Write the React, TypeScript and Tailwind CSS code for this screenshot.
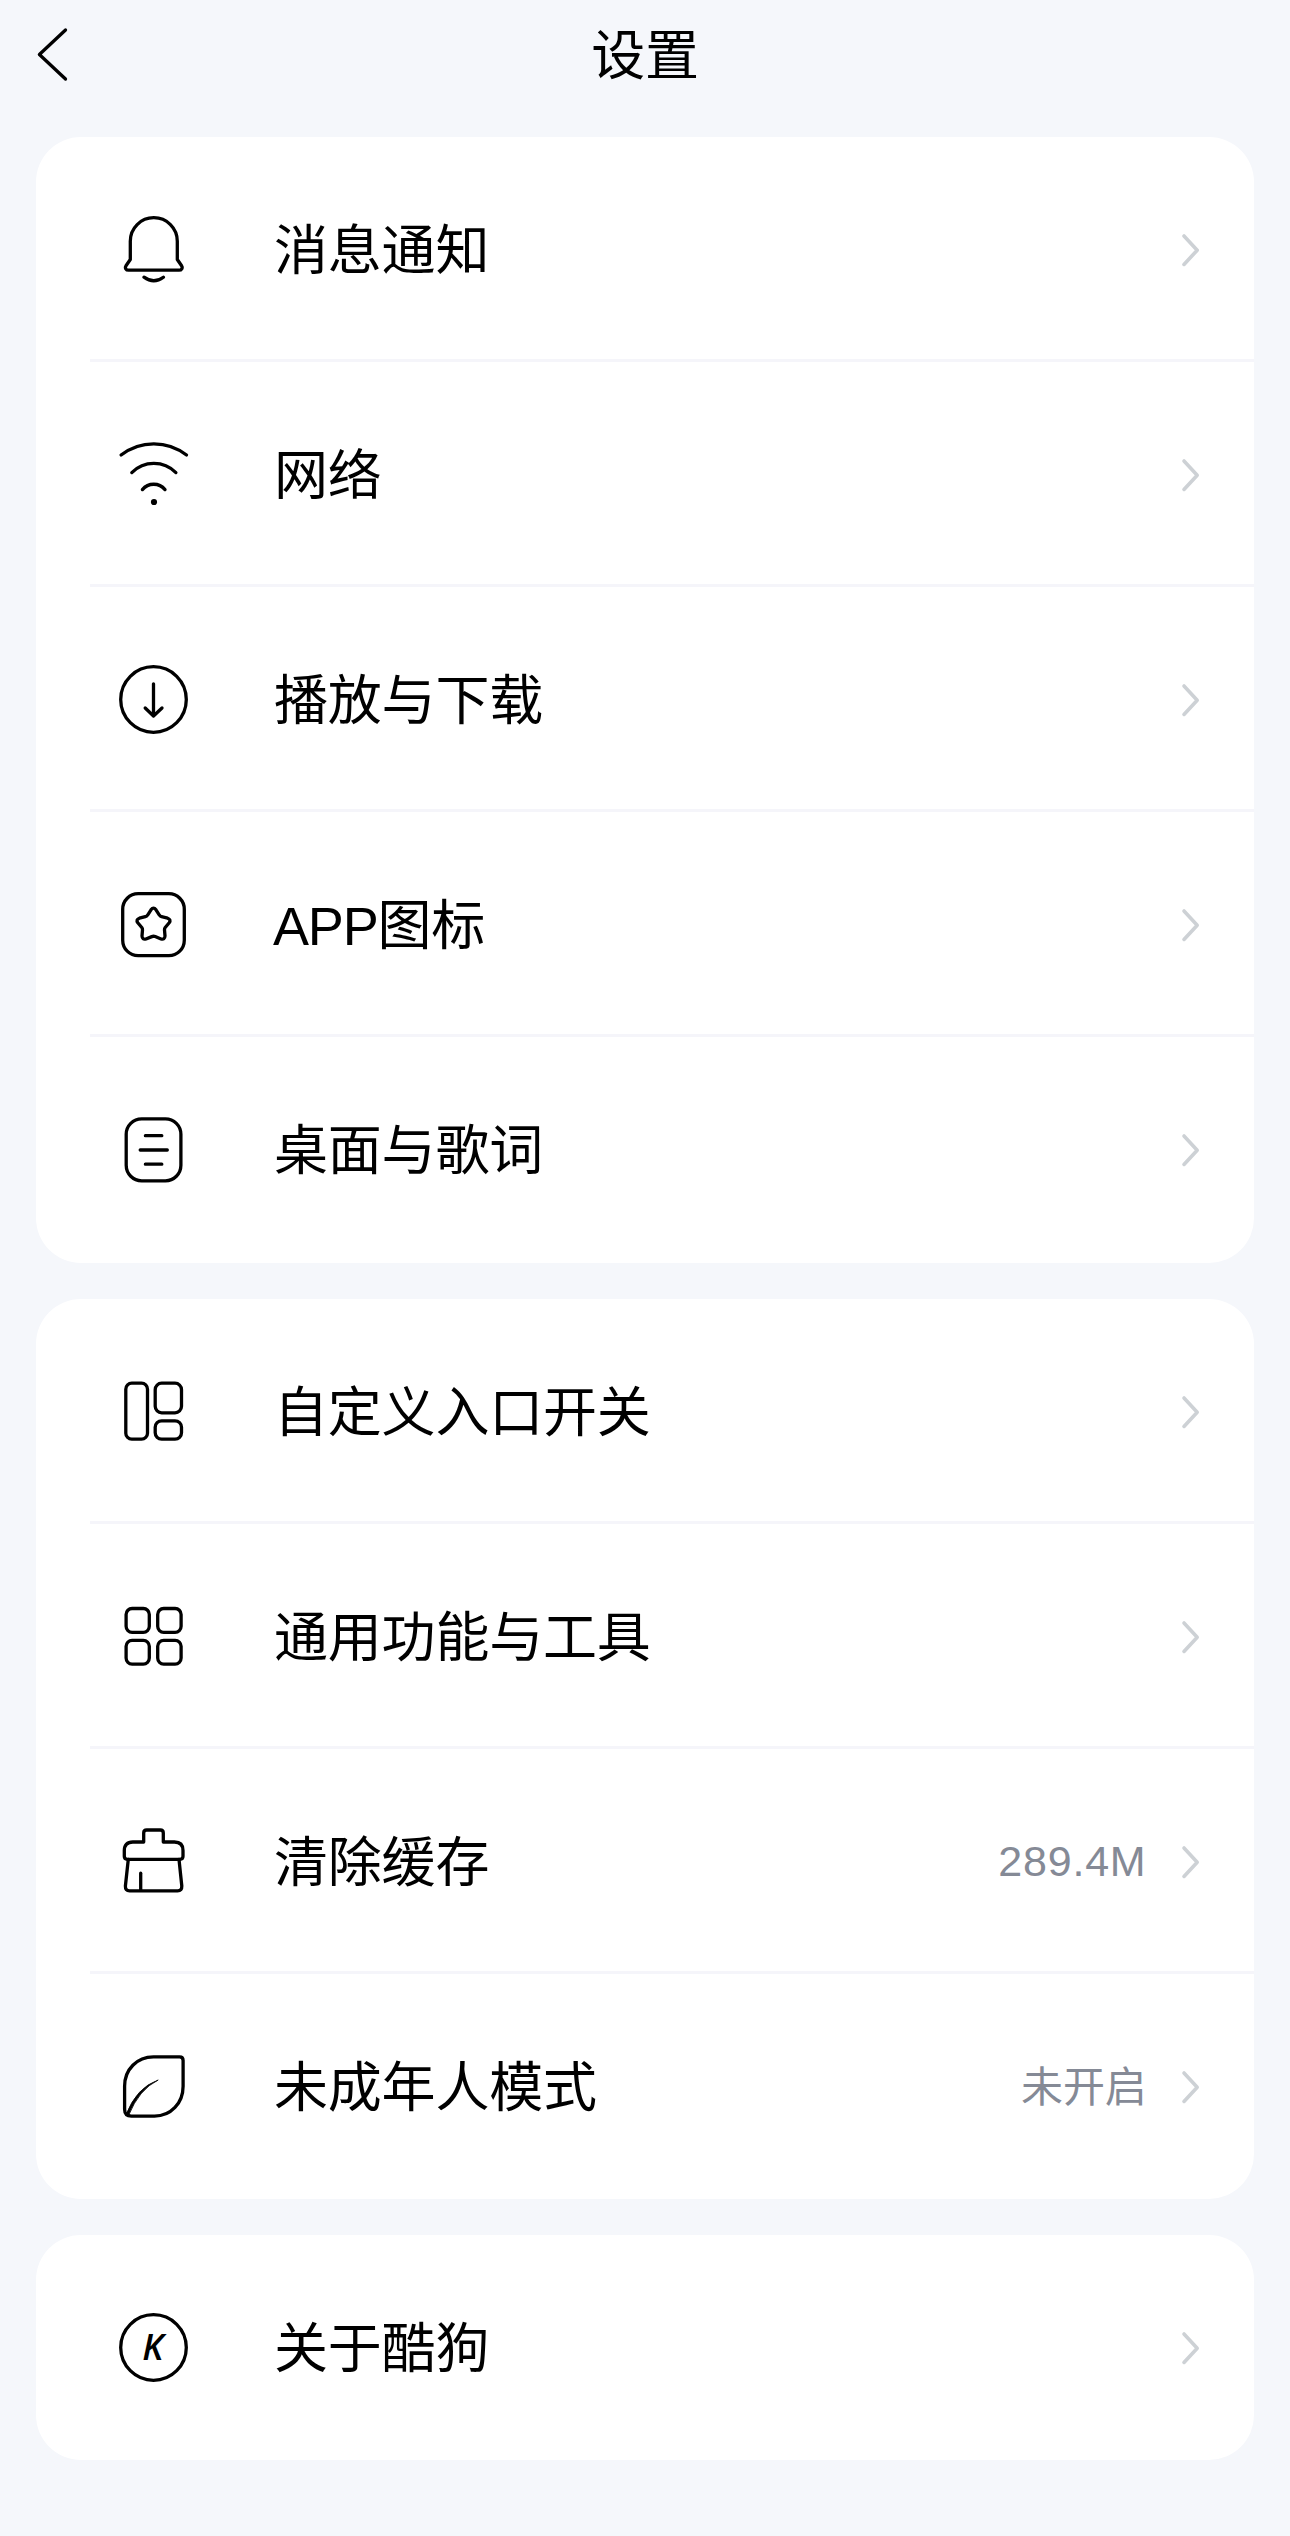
import React from 'react'
import { clsx } from 'clsx'

interface SettingItem {
  label: React.ReactNode
  icon: React.ReactNode
  value?: string
}

const groups: SettingItem[][] = [
  [
    { label: '消息通知', icon: <BellIcon /> },
    { label: '网络', icon: <WifiIcon /> },
    { label: '播放与下载', icon: <DownloadIcon /> },
    {
      label: (
        <>
          <span className="-ml-px tracking-[-1.2px]">APP</span>图标
        </>
      ),
      icon: <StarIcon />,
    },
    { label: '桌面与歌词', icon: <LyricsIcon /> },
  ],
  [
    { label: '自定义入口开关', icon: <EntryIcon /> },
    { label: '通用功能与工具', icon: <ToolsIcon /> },
    { label: '清除缓存', icon: <BroomIcon />, value: '289.4M' },
    { label: '未成年人模式', icon: <LeafIcon />, value: '未开启' },
  ],
  [{ label: '关于酷狗', icon: <AboutIcon /> }],
]

export default function App() {
  return (
    <div className="min-h-[2536px] w-full bg-[#f5f7fb] font-['Liberation_Sans','Noto_Sans_CJK_SC',sans-serif] text-black">
      <Header title="设置" />
      <main className="flex flex-col gap-9 px-9">
        {groups.map((items, i) => (
          <SettingGroup key={i} items={items} />
        ))}
      </main>
    </div>
  )
}

function Header({ title }: { title: string }) {
  return (
    <header className="mb-7 grid h-[109px] grid-cols-[1fr_auto_1fr] items-center">
      <button type="button" aria-label="返回" className="ml-[35px] w-fit">
        <svg width="34" height="55" viewBox="0 0 34 55" fill="none" stroke="currentColor" strokeWidth="3.3" strokeLinecap="round" strokeLinejoin="round">
          <path d="M30.5 3 4.4 27.5 30.5 52" />
        </svg>
      </button>
      <h1 className="pt-[3px] text-[54px] leading-none tracking-[-0.2px]">{title}</h1>
    </header>
  )
}

function SettingGroup({ items }: { items: SettingItem[] }) {
  return (
    <section className={clsx('overflow-hidden rounded-[45px] bg-white', items.length > 4 && 'pb-px')}>
      {items.map((item, i) => (
        <SettingRow key={i} item={item} last={i === items.length - 1} />
      ))}
    </section>
  )
}

function SettingRow({ item, last }: { item: SettingItem; last: boolean }) {
  return (
    <div className="flex h-[225px] flex-col pl-[54px]">
      <div className="flex h-[225px] shrink-0 items-center pr-[54.5px] pl-[27px]">
        {item.icon}
        <span className="ml-[84px] flex-1 pt-[3px] text-[54px] leading-none tracking-[-0.2px]">
          {item.label}
        </span>
        {item.value && (
          <span
            className={clsx(
              'mr-[33px] leading-none text-[#858a96]',
              /\d/.test(item.value)
                ? 'text-[43px] tracking-[0.8px]'
                : 'pt-[3px] text-[42px] tracking-[-0.2px]'
            )}
          >
            {item.value}
          </span>
        )}
        <svg width="20" height="35" viewBox="0 0 20 35" fill="none" stroke="#cdd1d5" strokeWidth="3.6" strokeLinecap="round" strokeLinejoin="round">
          <path d="M4 4 17.2 18.2 4 32.4" />
        </svg>
      </div>
      {!last && <div className="-mt-[3px] h-[3px] shrink-0 bg-[#f5f5fa]" />}
    </div>
  )
}

function Icon({ children }: { children: React.ReactNode }) {
  return (
    <svg
      className="shrink-0"
      width="73"
      height="73"
      viewBox="0 0 73 73"
      fill="none"
      stroke="currentColor"
      strokeWidth="3.3"
      strokeLinecap="round"
      strokeLinejoin="round"
    >
      {children}
    </svg>
  )
}

function BellIcon() {
  return (
    <Icon>
      <path d="M36.8 4.7C23.8 4.7 13.3 15.2 13.3 28.2V46.5L9 52.8C7.6 55 9 57.2 11.5 57.2H62C64.6 57.2 66 55 64.6 52.8L60.3 46.5V28.2C60.3 15.2 49.8 4.7 36.8 4.7Z" />
      <path d="M27 64.2Q36.8 71.4 46.4 64.2" />
    </Icon>
  )
}

function WifiIcon() {
  return (
    <Icon>
      <path d="M4.1 17A53.3 53.3 0 0 1 69.5 17" />
      <path d="M14.8 34.6A30.9 30.9 0 0 1 58.9 34.6" />
      <path d="M25.4 51.6A14.6 14.6 0 0 1 48 51.6" />
      <circle cx="37" cy="64" r="3.1" fill="currentColor" stroke="none" />
    </Icon>
  )
}

function DownloadIcon() {
  return (
    <Icon>
      <circle cx="36.5" cy="36.5" r="32.8" />
      <path d="M36.5 20.8V53M28.2 45 36.5 53 45 45" />
    </Icon>
  )
}

function StarIcon() {
  return (
    <Icon>
      <rect x="5.7" y="5.7" width="61.6" height="62" rx="15.5" />
      <path d="M34 21.8Q36.5 18.4 39 21.8L42.2 26.8Q43 28.2 44.6 28.7L50.6 30.2Q54.4 31.6 52.2 34.8L48 39.8Q47.4 40.8 47.5 42L48 48Q47.8 52 44 51L38.2 48.6Q36.5 47.9 34.8 48.6L29 51Q25.2 52 25 48L25.5 42Q25.6 40.8 25 39.8L20.8 34.8Q18.6 31.6 22.4 30.2L28.4 28.7Q30 28.2 30.8 26.8Z" />
    </Icon>
  )
}

function LyricsIcon() {
  return (
    <Icon>
      <rect x="9.2" y="5.8" width="54.7" height="62" rx="15.5" />
      <path d="M28.4 22.7H44.8M23.2 37H50.3M28.4 51.2H44.8" />
    </Icon>
  )
}

function EntryIcon() {
  return (
    <Icon>
      <rect x="8.8" y="8.2" width="21.7" height="56" rx="6" />
      <rect x="38.2" y="8.2" width="26.3" height="29.6" rx="6.5" />
      <rect x="38.2" y="45.8" width="26.3" height="18.4" rx="6.5" />
    </Icon>
  )
}

function ToolsIcon() {
  return (
    <Icon>
      <rect x="9.1" y="8.5" width="23.2" height="23.8" rx="6" />
      <rect x="40.7" y="8.5" width="23.4" height="23.8" rx="6" />
      <rect x="9.1" y="40.3" width="23.2" height="23.8" rx="6" />
      <rect x="40.7" y="40.3" width="23.4" height="23.8" rx="6" />
    </Icon>
  )
}

function BroomIcon() {
  return (
    <Icon>
      <path d="M26.7 17V8Q26.7 5 29.7 5H43.3Q46.3 5 46.3 8V17H57.5Q66 17 66 25.5V31.3Q66 34.3 63 34.3H10.3Q7.3 34.3 7.3 31.3V25.5Q7.3 17 15.8 17Z" />
      <path d="M11.3 34.3 8.4 61Q8.2 65.8 12.6 65.8H60.6Q65 65.8 64.8 61L62 34.3" />
      <path d="M23.7 48.2V65.3" />
    </Icon>
  )
}

function LeafIcon() {
  return (
    <Icon>
      <path d="M36.5 6.9H62.6Q66.1 6.9 66.1 10.4V36.2C66.1 53 54 66.1 37.5 66.1H14.4Q7.6 66.1 7.6 59.3V36.2C7.6 19.4 20 6.9 36.5 6.9Z" />
      <path d="M9 64.6Q19.5 37.5 41.2 30Q22 39.5 11.8 65Z" fill="currentColor" strokeWidth="0.8" />
    </Icon>
  )
}

function AboutIcon() {
  return (
    <Icon>
      <circle cx="36.5" cy="36.5" r="32.8" />
      <text
        x="35.8"
        y="49.3"
        textAnchor="middle"
        fill="currentColor"
        stroke="none"
        className="font-['Open_Sans',sans-serif] text-[36px] font-semibold italic"
      >
        K
      </text>
    </Icon>
  )
}
